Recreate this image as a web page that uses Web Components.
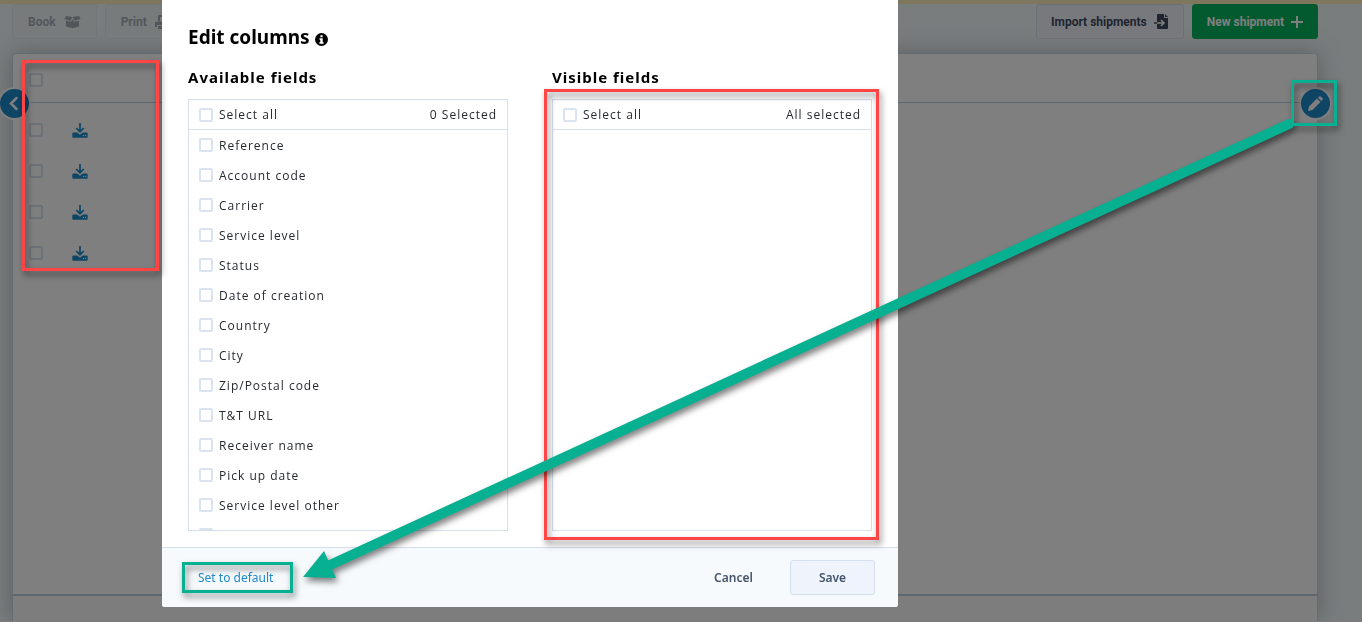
<!DOCTYPE html>
<html lang="en">
<head>
<meta charset="utf-8">
<title>Shipments</title>
<style>
  body {
    margin: 0;
    overflow: hidden;
    background: #f4fafc;
    font-family: Roboto, "Liberation Sans", sans-serif;
  }
</style>
</head>
<body>
<shipments-page></shipments-page>
<modal-backdrop>
  <edit-columns></edit-columns>
</modal-backdrop>
<callout-layer></callout-layer>

<script>
const fields = [
  'Reference', 'Account code', 'Carrier', 'Service level', 'Status',
  'Date of creation', 'Country', 'City', 'Zip/Postal code', 'T&T URL',
  'Receiver name', 'Pick up date', 'Service level other', ''
];

const checkboxStyle = `
  input[type=checkbox] {
    appearance: none;
    box-sizing: border-box;
    flex: none;
    width: 14px;
    height: 14px;
    margin: 0;
    border: 2px solid #d9e3f2;
    border-radius: 2px;
    background: #fff;
  }
  input[type=checkbox]:checked {
    background: #1d8acb;
  }`;

const define = (name, html, setup) => {
  const template = document.createElement('template');
  template.innerHTML = html;
  window.customElements.define(name, class extends HTMLElement {
    constructor() {
      super();
      this.attachShadow({mode: 'open'});
      this.shadowRoot.appendChild(template.content.cloneNode(true));
    }

    connectedCallback() {
      setup && setup(this, this.shadowRoot);
    }
  });
};

define('tool-button', `
  <style>
    :host {
      display: block;
    }
    button {
      display: flex;
      align-items: center;
      gap: 7px;
      box-sizing: border-box;
      height: 35px;
      padding: 0 14px;
      border: 1px solid #d9dff0;
      border-radius: 3px;
      background: #f1f3fb;
      color: #3f4a5c;
      font: 700 12px/16px Roboto, sans-serif;
      white-space: nowrap;
    }
    :host([muted]) button {
      gap: 8px;
      padding: 0 15px;
      border-color: #e6ebf2;
      background: #f1f6f9;
      color: #a5adb6;
    }
    :host([primary]) button {
      border-color: #07b45e;
      background: #07b45e;
      color: #fff;
    }
  </style>
  <button type="button"><slot></slot><slot name="icon"></slot></button>`);

define('shipments-table', `
  <style>
    :host {
      display: block;
      border: 1px solid #c9d8e6;
      border-bottom: 0;
      border-radius: 3px 3px 0 0;
      background: #fff;
      box-shadow: 0 0 24px rgba(60, 80, 90, .35);
    }
    table {
      width: 100%;
      border-collapse: collapse;
    }
    th, td {
      box-sizing: border-box;
      height: 41px;
      padding: 0 0 0 16px;
      text-align: left;
      vertical-align: middle;
    }
    th {
      height: 48px;
      padding-top: 4px;
      border-bottom: 1px solid #b9cfe0;
    }
    tbody::before {
      content: "";
      display: block;
      height: 7px;
    }
    td:first-child, th:first-child {
      width: 43px;
    }
    input, svg {
      display: block;
    }
    a {
      display: block;
      width: 16px;
      color: #1d8acb;
    }
    .foot {
      height: 25px;
      margin-top: 320px;
      border-top: 2px solid #bccfdb;
      background: #fafafd;
    }
    ${checkboxStyle}
  </style>
  <table>
    <thead>
      <tr><th><input type="checkbox" aria-label="All shipments"></th><th></th></tr>
    </thead>
    <tbody></tbody>
  </table>
  <div class="foot"></div>`,
(host, root) => {
  const body = root.querySelector('tbody');
  for (let i = 1; i <= 4; i++) {
    body.insertAdjacentHTML('beforeend', `
      <tr>
        <td><input type="checkbox" aria-label="Shipment ${i}"></td>
        <td><a href="#label-${i}" aria-label="Download label ${i}">
          <svg width="16" height="16" viewBox="0 0 16 16">
            <path d="M8 1v8M4.200 6L8 9.700 11.800 6" fill="none" stroke="currentColor" stroke-width="1.700"/>
            <path d="M1.500 10.500h3.700L8 12.800l2.800-2.300h3.700q1.200 0 1.200 1.200v3q0 1-1 1H1.300q-1 0-1-1v-3q0-1.200 1.200-1.200z" fill="currentColor"/>
            <circle cx="11.500" cy="13.500" r=".7" fill="#fff"/><circle cx="13.700" cy="13.500" r=".7" fill="#fff"/>
          </svg></a></td>
      </tr>`);
  }
});

define('round-button', `
  <style>
    :host {
      display: block;
    }
    button {
      display: flex;
      align-items: center;
      justify-content: center;
      width: 29px;
      height: 29px;
      padding: 0;
      border: 0;
      border-radius: 50%;
      background: #1d8acb;
      box-shadow: 0 0 0 2px #fff;
      color: #fff;
    }
  </style>
  <button type="button"><slot></slot></button>`,
(host, root) => {
  root.querySelector('button').setAttribute('aria-label', host.getAttribute('label'));
});

define('shipments-page', `
  <style>
    :host {
      display: block;
      position: relative;
      border-top: 4px solid #ffeeba;
    }
    nav {
      display: flex;
      gap: 8px;
      padding: 0 44px 0 12px;
    }
    .space {
      flex: 1;
    }
    main {
      padding: 14px 44px 0 12px;
    }
    svg {
      display: block;
    }
    .back, .edit {
      position: absolute;
      top: 85px;
    }
    .back {
      left: 0;
    }
    .edit {
      right: 32px;
    }
  </style>
  <nav>
    <tool-button muted>Book
      <svg slot="icon" width="17" height="14" viewBox="0 0 17 14" fill="currentColor">
        <path d="M2 1l6.500 1L6.600 5.700 .3 4zM15 1L8.500 2l1.900 3.700L16.700 4z"/>
        <path d="M2 5.500l5 1.300 1.500-2.500L10 6.800l5-1.300V11.500L8.500 13.200 2 11.500z"/>
      </svg>
    </tool-button>
    <tool-button muted>Print
      <svg slot="icon" width="15" height="14" viewBox="0 0 15 14" fill="currentColor">
        <path d="M3 0h8l2 2v4h-2V3H10V2H5v4H3zM2 6.500h11q2 0 2 2V12h-2v-2H2v2H0V8.500q0-2 2-2zM3 11h9v3H3z"/>
      </svg>
    </tool-button>
    <div class="space"></div>
    <tool-button>Import shipments
      <svg slot="icon" width="15" height="15" viewBox="0 0 15 15">
        <path d="M4 0h6v4h4v10q0 1-1 1H4q-1 0-1-1V1q0-1 1-1zM11 0l3 3h-3z" fill="currentColor"/>
        <path d="M3 9h6.500M7 6l3 3-3 3" fill="none" stroke="#fff" stroke-width="1.500"/>
        <path d="M0 9h3" stroke="currentColor" stroke-width="1.500"/>
      </svg>
    </tool-button>
    <tool-button primary>New shipment
      <svg slot="icon" width="12" height="12" viewBox="0 0 12 12">
        <path d="M6 0v12M0 6h12" stroke="currentColor" stroke-width="2"/>
      </svg>
    </tool-button>
  </nav>
  <main><shipments-table></shipments-table></main>
  <round-button class="back" label="Back">
    <svg width="14" height="15" viewBox="0 0 14 15" fill="none" stroke="currentColor" stroke-width="2.500" stroke-linecap="round">
      <path d="M8.500 2L3 7.500 8.500 13"/>
    </svg>
  </round-button>
  <round-button class="edit" label="Edit columns">
    <svg width="15" height="15" viewBox="0 0 15 15" fill="currentColor">
      <path d="M0 15l1-4.500L9 2.500 12.500 6l-8 8zM10 1.700L11 .7q1-1 2 0l1.300 1.300q1 1 0 2l-1 1z"/>
    </svg>
  </round-button>`);

define('modal-backdrop', `
  <style>
    :host {
      display: flex;
      align-items: flex-start;
      position: fixed;
      inset: 0;
      box-sizing: border-box;
      padding: 0 162px;
      background: rgba(0, 0, 0, .5);
    }
  </style>
  <slot></slot>`);

define('field-list', `
  <style>
    :host {
      display: block;
      flex: 1;
      font: 400 12px/16px "Open Sans", "Noto Sans", sans-serif;
      letter-spacing: 1px;
      color: #26292e;
    }
    h2 {
      margin: 0 0 12px;
      color: #000;
      font-family: "Noto Sans", sans-serif;
      font-size: 15px;
      font-weight: 700;
      line-height: 20px;
    }
    .box {
      box-sizing: border-box;
      height: 432px;
      overflow: hidden;
      border: 1px solid #d5e0ec;
    }
    header {
      display: flex;
      justify-content: space-between;
      align-items: center;
      height: 29px;
      padding: 0 10px;
      border-bottom: 1px solid #d5e0ec;
    }
    label {
      display: flex;
      align-items: center;
      gap: 6px;
    }
    ul {
      margin: 0;
      padding: 0;
      list-style: none;
    }
    li label {
      height: 30px;
      padding-left: 10px;
    }
    li span {
      padding-top: 2px;
    }
    ${checkboxStyle}
  </style>
  <h2><slot></slot></h2>
  <div class="box">
    <header>
      <label><input type="checkbox">Select all</label>
      <span><slot name="count"></slot></span>
    </header>
    <ul></ul>
  </div>`,
(host, root) => {
  if (!host.hasAttribute('filled')) return;
  const list = root.querySelector('ul');
  fields.forEach(name => {
    const item = document.createElement('li');
    item.innerHTML = '<label><input type="checkbox"><span></span></label>';
    item.querySelector('span').textContent = name;
    list.appendChild(item);
  });
});

define('edit-columns', `
  <style>
    :host {
      display: block;
      flex: 0 1 736px;
      overflow: hidden;
      border-radius: 0 0 3px 3px;
      background: #fff;
      font: 600 12px/16px "Noto Sans", "Open Sans", sans-serif;
    }
    .content {
      padding: 24px 26px 16px;
    }
    h1 {
      display: flex;
      align-items: center;
      gap: 5px;
      margin: 0 0 16px;
      font-size: 19px;
      font-weight: 700;
      line-height: 27px;
    }
    h1 svg {
      margin-top: 3px;
    }
    .lists {
      display: flex;
      gap: 44px;
    }
    footer {
      display: flex;
      align-items: center;
      box-sizing: border-box;
      height: 60px;
      padding: 0 23px 0 36px;
      border-top: 1px solid #d5e0ec;
      background: #f6fafd;
    }
    a {
      margin-right: auto;
      color: #1d8acb;
      font-weight: 400;
      text-decoration: none;
    }
    button {
      box-sizing: border-box;
      width: 85px;
      height: 35px;
      padding: 0;
      border: 1px solid transparent;
      border-radius: 3px;
      background: none;
      color: #44546b;
      font: inherit;
    }
    .cancel {
      margin-right: 14px;
    }
    .save {
      border-color: #d5e0f0;
      background: #eff3fb;
    }
  </style>
  <div class="content">
    <h1>Edit columns
      <svg width="13" height="13" viewBox="0 0 13 13">
        <circle cx="6.500" cy="6.500" r="6.500"/>
        <path d="M5.400 2.200h2.200v2H5.400zM4.500 5.200h3.200v4h.9v1.500H4.400V9.200h.9V6.700h-.8z" fill="#fff"/>
      </svg>
    </h1>
    <div class="lists">
      <field-list filled>Available fields<span slot="count">0 Selected</span></field-list>
      <field-list>Visible fields<span slot="count">All selected</span></field-list>
    </div>
  </div>
  <footer>
    <a href="#default">Set to default</a>
    <button type="button" class="cancel">Cancel</button>
    <button type="button" class="save">Save</button>
  </footer>`);

// marks drawn on top of everything
define('callout-layer', `
  <style>
    :host {
      position: fixed;
      inset: 0;
      pointer-events: none;
    }
    svg {
      display: block;
      width: 100%;
      height: 100%;
    }
    g {
      filter: drop-shadow(2px 4px 3px rgba(0, 0, 0, .5));
    }
    rect {
      fill: none;
      stroke-width: 3;
    }
    .red {
      stroke: #ff4545;
    }
    .green {
      stroke: #08b092;
    }
  </style>
  <svg>
    <g class="red">
      <rect x="23.500" y="61.500" width="134" height="208"/>
      <rect x="545.500" y="90.500" width="332" height="448"/>
    </g>
    <g class="green">
      <rect x="183.500" y="563.500" width="108" height="28"/>
      <rect x="1292.500" y="81.500" width="43" height="43"/>
      <path d="M1289 124L330 565" stroke-width="10" stroke-linecap="round"/>
      <path d="M303 577L324 551 336 578z" fill="#08b092" stroke="none"/>
    </g>
  </svg>`);
</script>
</body>
</html>
